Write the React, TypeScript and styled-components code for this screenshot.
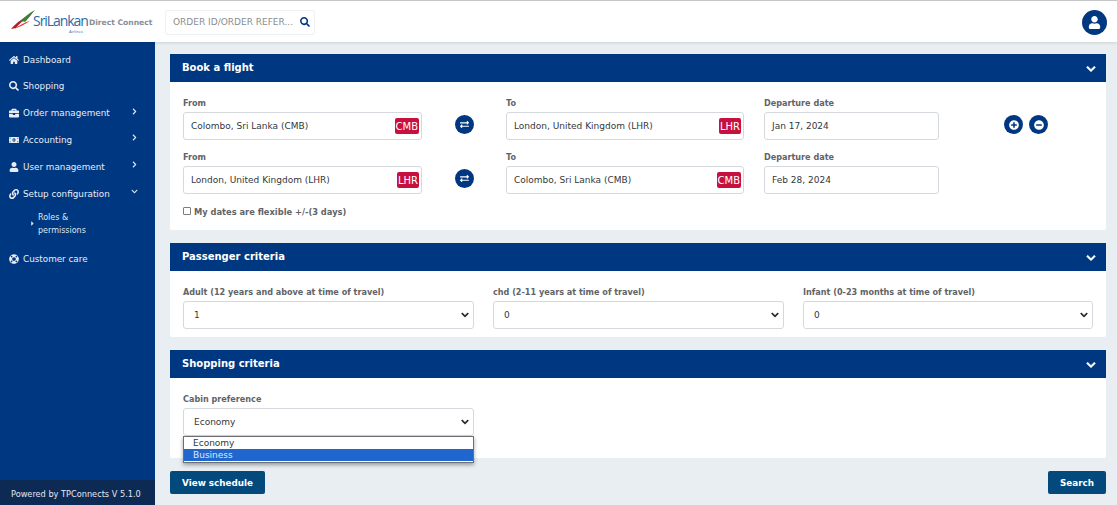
import styled, { createGlobalStyle } from 'styled-components';
import {
  FaHome,
  FaSearch,
  FaBriefcase,
  FaMoneyBillAlt,
  FaUser,
  FaLink,
  FaLifeRing,
  FaChevronRight,
  FaChevronDown,
  FaCaretRight,
  FaExchangeAlt,
  FaPlusCircle,
  FaMinusCircle,
} from 'react-icons/fa';

const NAVY = '#003781';

const GlobalStyle = createGlobalStyle`
  html, body {
    margin: 0;
    padding: 0;
    height: 100%;
    overflow: hidden;
  }
  body {
    font-family: "DejaVu Sans", Verdana, sans-serif;
    background: #e9eef2;
  }
  * {
    box-sizing: border-box;
  }
`;

const menu = [
  { label: 'Dashboard', icon: <FaHome /> },
  { label: 'Shopping', icon: <FaSearch /> },
  { label: 'Order management', icon: <FaBriefcase />, arrow: 'right' },
  { label: 'Accounting', icon: <FaMoneyBillAlt />, arrow: 'right' },
  { label: 'User management', icon: <FaUser />, arrow: 'right' },
  { label: 'Setup configuration', icon: <FaLink />, arrow: 'down' },
];

const Logo = () => (
  <LogoWrap>
    <svg width="25" height="20" viewBox="0 0 25 20">
      <path d="M0 19 C6 12 13 7 20 5 C14 9 8 14 5 18 Z" fill="#b3202c" />
      <path d="M8 13 C13 7 18 3 24 0 C20 5 17 9 14 12 C12 11 10 12 8 13 Z" fill="#3f7d3a" />
      <path d="M3 19 C9 15 14 12 19 11 C14 14 9 17 3 19 Z" fill="#d8412f" />
    </svg>
    <LogoText>
      <LogoName>SriLankan</LogoName>
      <LogoSub>Airlines</LogoSub>
    </LogoText>
    <LogoTag>Direct Connect</LogoTag>
  </LogoWrap>
);

const FlightRow = (props: any) => {
  return (
    <Row>
      <Field $width={239}>
        <Label>From</Label>
        <InputBox>
          <span>{props.from}</span>
          <Code>{props.fromCode}</Code>
        </InputBox>
      </Field>
      <SwapSlot>
        <RoundButton>
          <FaExchangeAlt />
        </RoundButton>
      </SwapSlot>
      <Field $width={238}>
        <Label>To</Label>
        <InputBox>
          <span>{props.to}</span>
          <Code>{props.toCode}</Code>
        </InputBox>
      </Field>
      <Field $width={175}>
        <Label>Departure date</Label>
        <InputBox>
          <span>{props.date}</span>
        </InputBox>
      </Field>
      {props.actions && (
        <Actions>
          <RoundButton $big>
            <FaPlusCircle />
          </RoundButton>
          <RoundButton $big>
            <FaMinusCircle />
          </RoundButton>
        </Actions>
      )}
    </Row>
  );
};

const SelectField = (props: any) => {
  return (
    <SelectWrap>
      <Label>{props.label}</Label>
      <SelectBox>
        <span>{props.value}</span>
        <FaChevronDown />
      </SelectBox>
      {props.children}
    </SelectWrap>
  );
};

export default function App() {
  return (
    <Page>
      <GlobalStyle />
      <Header>
        <Logo />
        <SearchBox>
          <span>ORDER ID/ORDER REFER...</span>
          <FaSearch />
        </SearchBox>
        <Avatar>
          <FaUser />
        </Avatar>
      </Header>
      <Body>
        <Sidebar>
          <Menu>
            {menu.map((item) => (
              <MenuItem key={item.label}>
                {item.icon}
                <span>{item.label}</span>
                {item.arrow === 'right' && <MenuArrow><FaChevronRight /></MenuArrow>}
                {item.arrow === 'down' && <MenuArrow><FaChevronDown /></MenuArrow>}
              </MenuItem>
            ))}
            <SubItem>
              <FaCaretRight />
              <span>Roles &amp; permissions</span>
            </SubItem>
            <MenuItem>
              <FaLifeRing />
              <span>Customer care</span>
            </MenuItem>
          </Menu>
          <Powered>Powered by TPConnects V 5.1.0</Powered>
        </Sidebar>
        <Main>
          <Card>
            <CardHeader>
              <span>Book a flight</span>
              <FaChevronDown />
            </CardHeader>
            <FlightBody>
              <FlightRow
                from="Colombo, Sri Lanka (CMB)"
                fromCode="CMB"
                to="London, United Kingdom (LHR)"
                toCode="LHR"
                date="Jan 17, 2024"
                actions
              />
              <FlightRow
                from="London, United Kingdom (LHR)"
                fromCode="LHR"
                to="Colombo, Sri Lanka (CMB)"
                toCode="CMB"
                date="Feb 28, 2024"
              />
              <Flexible>
                <CheckBox />
                <span>My dates are flexible +/-(3 days)</span>
              </Flexible>
            </FlightBody>
          </Card>
          <Card>
            <CardHeader>
              <span>Passenger criteria</span>
              <FaChevronDown />
            </CardHeader>
            <PassengerBody>
              <SelectField label="Adult (12 years and above at time of travel)" value="1" />
              <SelectField label="chd (2-11 years at time of travel)" value="0" />
              <SelectField label="Infant (0-23 months at time of travel)" value="0" />
            </PassengerBody>
          </Card>
          <Card>
            <CardHeader>
              <span>Shopping criteria</span>
              <FaChevronDown />
            </CardHeader>
            <ShoppingBody>
              <SelectField label="Cabin preference" value="Economy">
                <Dropdown>
                  <Option>Economy</Option>
                  <Option $active>Business</Option>
                </Dropdown>
              </SelectField>
            </ShoppingBody>
          </Card>
          <Footer>
            <PrimaryButton>View schedule</PrimaryButton>
            <PrimaryButton>Search</PrimaryButton>
          </Footer>
        </Main>
      </Body>
    </Page>
  );
}

const Page = styled.div`
  width: 1117px;
  height: 505px;
  display: flex;
  flex-direction: column;
  overflow: hidden;
`;

const Header = styled.header`
  position: relative;
  z-index: 1;
  height: 42px;
  flex: none;
  display: flex;
  align-items: center;
  padding: 1px 10px 0 11px;
  background: #fff;
  border-top: 1px solid #c4c6c8;
  box-shadow: 0 1px 3px rgba(0, 0, 0, 0.12);
`;

const LogoWrap = styled.div`
  width: 154px;
  flex: none;
  display: flex;
  align-items: flex-start;
`;

const LogoText = styled.div`
  display: flex;
  flex-direction: column;
  align-items: flex-end;
  margin-left: -3px;
  color: #2c6aa6;
`;

const LogoName = styled.span`
  font-family: "Open Sans", sans-serif;
  font-size: 14px;
  line-height: 18px;
  letter-spacing: -1.05px;
  margin-top: 2px;
`;

const LogoSub = styled.span`
  font-family: "Open Sans", sans-serif;
  font-size: 4px;
  line-height: 4px;
  margin-right: 5px;
`;

const LogoTag = styled.span`
  font-size: 7.6px;
  font-weight: 700;
  color: #8b8f93;
  line-height: 10px;
  margin: 8px 0 0 1px;
  white-space: nowrap;
`;

const SearchBox = styled.div`
  width: 150px;
  height: 25px;
  display: flex;
  align-items: center;
  justify-content: space-between;
  padding: 0 4px 0 7px;
  border: 1px solid #eff1f3;
  border-radius: 3px;
  font-size: 9px;
  color: #8a8d90;
  white-space: nowrap;

  svg {
    color: ${NAVY};
    font-size: 10px;
  }
`;

const Avatar = styled.div`
  width: 25px;
  height: 25px;
  margin-left: auto;
  border-radius: 50%;
  background: ${NAVY};
  color: #fff;
  display: flex;
  align-items: center;
  justify-content: center;
  font-size: 13px;
`;

const Body = styled.div`
  flex: 1;
  display: flex;
  min-height: 0;
`;

const Sidebar = styled.aside`
  width: 155px;
  flex: none;
  display: flex;
  flex-direction: column;
  background: ${NAVY};
`;

const Menu = styled.nav`
  flex: 1;
  padding-top: 4.2px;
`;

const MenuItem = styled.div`
  height: 26.8px;
  display: flex;
  align-items: center;
  gap: 4px;
  padding-left: 9px;
  color: #e8edf5;
  font-size: 8.8px;
  white-space: nowrap;

  > svg {
    font-size: 10px;
    flex: none;
  }
`;

const MenuArrow = styled.span`
  margin-left: auto;
  margin-right: 17px;
  margin-top: -4px;
  display: flex;
  font-size: 7px;
`;

const SubItem = styled.div`
  display: flex;
  align-items: center;
  gap: 2px;
  padding: 4px 40px 8.2px 29px;
  color: #dfe6f1;
  font-size: 8px;
  line-height: 13px;

  svg {
    font-size: 7px;
    flex: none;
  }
`;

const Powered = styled.div`
  height: 25px;
  flex: none;
  display: flex;
  align-items: center;
  padding: 2px 0 0 11px;
  background: #0d2a55;
  color: #e3e7ee;
  font-size: 8.2px;
  white-space: nowrap;
`;

const Main = styled.main`
  flex: 1;
  min-width: 0;
  padding: 12px 11px 0 15px;
  display: flex;
  flex-direction: column;
  gap: 13px;
`;

const Card = styled.section`
  background: #fff;
  border-radius: 2px;
`;

const CardHeader = styled.div`
  height: 28px;
  display: flex;
  align-items: center;
  justify-content: space-between;
  padding: 0 10px 1px 12px;
  background: ${NAVY};
  color: #fff;
  font-size: 10px;
  font-weight: 700;

  svg {
    font-size: 10px;
    margin-top: 3px;
    stroke: currentColor;
    stroke-width: 30;
  }
`;

const FlightBody = styled.div`
  height: 148px;
  padding: 14px 13px 0;
  display: flex;
  flex-direction: column;
  gap: 10px;
`;

const Row = styled.div`
  display: flex;
  align-items: flex-start;
`;

const Field = styled.div<{ $width: number }>`
  width: ${(p) => p.$width}px;
  flex: none;
  margin-right: 20px;
`;

const Label = styled.div`
  height: 16px;
  font-size: 8.1px;
  font-weight: 700;
  line-height: 14px;
  color: #5f6468;
  white-space: nowrap;
`;

const InputBox = styled.div`
  height: 28px;
  display: flex;
  align-items: center;
  justify-content: space-between;
  padding: 0 2px 0 7px;
  border: 1px solid #d5d9dd;
  border-radius: 3px;
  background: #fff;
  color: #33373b;
  font-size: 9px;
  white-space: nowrap;
`;

const Code = styled.span`
  height: 16px;
  padding: 0 1px;
  display: flex;
  align-items: center;
  border-radius: 2px;
  background: #c8103f;
  color: #fff;
  font-size: 10px;
`;

const SwapSlot = styled.div`
  width: 84px;
  margin-left: -20px;
  padding-top: 19px;
  flex: none;
  display: flex;
  justify-content: center;
`;

const RoundButton = styled.div<{ $big?: boolean }>`
  width: 19px;
  height: 19px;
  border-radius: 50%;
  background: ${NAVY};
  color: #fff;
  display: flex;
  align-items: center;
  justify-content: center;
  font-size: ${(p) => (p.$big ? '10px' : '9px')};
`;

const Actions = styled.div`
  display: flex;
  gap: 6px;
  margin: 19px 0 0 45px;
`;

const Flexible = styled.label`
  display: flex;
  align-items: center;
  gap: 3px;
  margin-top: 3px;
  font-size: 8.3px;
  font-weight: 700;
  color: #5f6468;
`;

const CheckBox = styled.span`
  width: 8px;
  height: 8px;
  margin-top: -2px;
  border: 1px solid #7a7e82;
  border-radius: 1px;
  background: #fff;
`;

const PassengerBody = styled.div`
  height: 66px;
  padding: 14px 14px 0 13px;
  display: grid;
  grid-template-columns: 291px 291px 290px;
  gap: 19px;
`;

const ShoppingBody = styled.div`
  height: 80px;
  padding: 14px 13px 0;
  width: 317px;
`;

const SelectWrap = styled.div`
  position: relative;
`;

const SelectBox = styled.div`
  height: 28px;
  display: flex;
  align-items: center;
  justify-content: space-between;
  padding: 0 4px 0 10px;
  border: 1px solid #d5d9dd;
  border-radius: 3px;
  background: #fff;
  color: #33373b;
  font-size: 9px;

  svg {
    font-size: 8px;
    color: #1b1d1f;
    stroke: currentColor;
    stroke-width: 30;
  }
`;

const Dropdown = styled.div`
  position: absolute;
  top: 44px;
  left: 0;
  right: 0;
  padding-bottom: 1px;
  border: 1px solid #6b6e72;
  background: #fff;
  box-shadow: 0 2px 4px rgba(0, 0, 0, 0.35);
`;

const Option = styled.div<{ $active?: boolean }>`
  height: 12px;
  padding-left: 9px;
  line-height: 12px;
  font-size: 9px;
  color: ${(p) => (p.$active ? '#dfe9f8' : '#33373b')};
  background: ${(p) => (p.$active ? '#1f66cf' : '#fff')};
`;

const Footer = styled.div`
  display: flex;
  justify-content: space-between;
  align-items: flex-start;
`;

const PrimaryButton = styled.div`
  height: 23px;
  padding: 0 12px;
  display: flex;
  align-items: center;
  border-radius: 2px;
  background: #03497c;
  color: #fff;
  font-size: 8.8px;
  font-weight: 700;
`;
